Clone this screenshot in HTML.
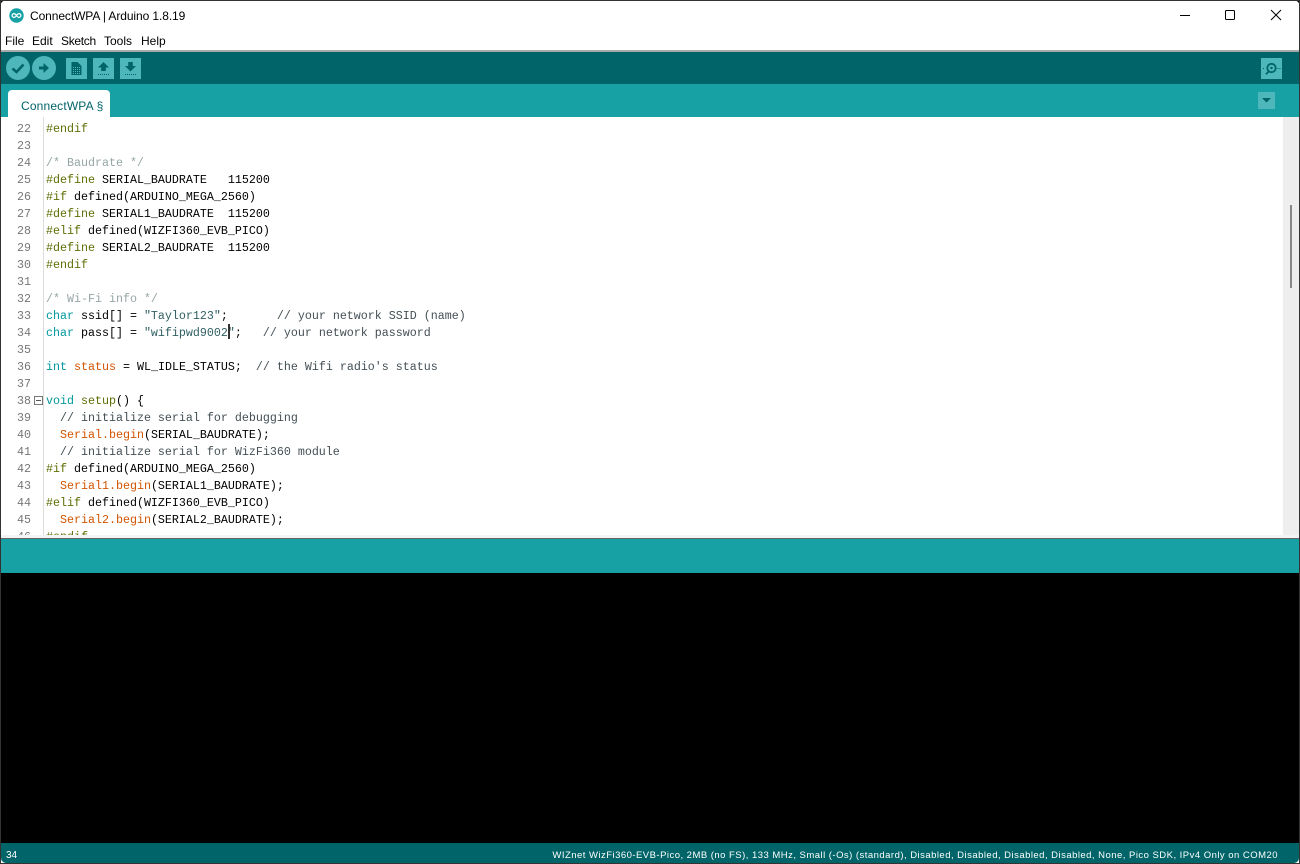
<!DOCTYPE html>
<html><head><meta charset="utf-8"><style>
html,body{margin:0;padding:0;background:#000}
#w{position:relative;width:1300px;height:864px;overflow:hidden;background:#000;font-family:"Liberation Sans",sans-serif}
#w>*{position:absolute}
.code{left:46px;top:121px;font:11.67px/17px "Liberation Mono",monospace;color:#000;white-space:pre;margin:0;width:1230px;height:414px;overflow:hidden}
.num{left:0;top:121px;width:31px;text-align:right;font:11.67px/17px "Liberation Mono",monospace;color:#777;white-space:pre;margin:0;height:414px;overflow:hidden}
.k{color:#00979c}.p{color:#5e6d03}.o{color:#d35400}.g{color:#95a5a6}.c{color:#434f54}.s{color:#2f5f62}
.m{top:34px;font-size:12px;color:#000;line-height:14px}
</style></head><body><div id="w">
<div style="left:0;top:0;width:1300px;height:864px;background:#fff;border-radius:7px 7px 0 0"></div>
<svg style="left:9px;top:8px" width="15" height="15" viewBox="0 0 15 15"><circle cx="7.5" cy="7.5" r="7.2" fill="#17a1a5"/><path d="M5 5.6a1.9 1.9 0 1 0 0 3.8c1.300 0 1.900-1.100 2.500-1.900s1.200-1.900 2.500-1.900a1.900 1.900 0 1 1 0 3.800c-1.300 0-1.900-1.100-2.500-1.900S6.300 5.600 5 5.600z" fill="none" stroke="#fff" stroke-width="1.200"/></svg>
<div style="left:30px;top:9px;font-size:12px;line-height:14px;color:#000;white-space:nowrap;letter-spacing:-.09px">ConnectWPA | Arduino 1.8.19</div>
<svg style="left:1170px;top:5px" width="120" height="20" viewBox="0 0 120 20" fill="none" stroke="#000" stroke-width="1"><path d="M10 10.500h10"/><rect x="55.500" y="5.500" width="9" height="9" rx="1"/><path d="M101 5l10 10M111 5l-10 10"/></svg>
<div class="m" style="left:5px">File</div><div class="m" style="left:32px">Edit</div><div class="m" style="left:61px;letter-spacing:-.3px">Sketch</div><div class="m" style="left:104px">Tools</div><div class="m" style="left:141px">Help</div>
<div style="left:1px;top:50px;width:1298px;height:2px;background:#a8a8a8"></div>
<div style="left:1px;top:52px;width:1298px;height:32px;background:#006468"></div>
<div style="left:1px;top:84px;width:1298px;height:33px;background:#17a1a5"></div>
<svg style="left:0;top:52px" width="145" height="32" viewBox="0 0 145 32">
<circle cx="18" cy="16" r="12" fill="#4db7bb"/><path d="M12.500 16.500l4 3.500 7-7.500" fill="none" stroke="#006468" stroke-width="2.600"/>
<circle cx="44" cy="16" r="12" fill="#4db7bb"/><path d="M39 14.500h4.500v-3.500l5.500 5-5.500 5v-3.500H39z" fill="#006468"/>
<rect x="66" y="6" width="21" height="21" fill="#4db7bb"/><path d="M71.500 10h6l4 4v9h-10z" fill="#006468"/><path d="M73 15.500h7M73 17.500h7M73 19.500h7M73 21.500h7" stroke="#4db7bb" stroke-width="1" stroke-dasharray="1 1"/>
<rect x="93" y="6" width="21" height="21" fill="#4db7bb"/><path d="M103.500 10l5.500 5.500h-3.200v3.500h-4.600v-3.500H98z" fill="#006468"/><path d="M98 22.500h11" stroke="#006468" stroke-width="1" stroke-dasharray="1 1"/>
<rect x="120" y="6" width="21" height="21" fill="#4db7bb"/><path d="M128.200 10h4.600v4h3.200l-5.500 5.500-5.500-5.500h3.200z" fill="#006468"/><path d="M125 22.500h11" stroke="#006468" stroke-width="1" stroke-dasharray="1 1"/>
</svg>
<svg style="left:1258px;top:58px" width="26" height="52" viewBox="0 0 26 52">
<rect x="3" y="0" width="21" height="21" fill="#4db7bb"/><circle cx="13.500" cy="10" r="4.200" fill="none" stroke="#006468" stroke-width="1.800"/><circle cx="13.500" cy="10" r="1.200" fill="#006468"/><path d="M10.500 13.500l-2.500 2.800" stroke="#006468" stroke-width="1.800"/><path d="M5 10.500h2M19.500 10.500h3" stroke="#006468" stroke-dasharray="1 1"/>
<rect x="0" y="34" width="17" height="17" fill="#4db7bb"/><path d="M4 40h9l-4.500 4.500z" fill="#006468"/>
</svg>
<div style="left:8px;top:90px;width:102px;height:27px;background:#fff;border-radius:4px 4px 0 0"></div>
<div style="left:21px;top:99px;font-size:12px;line-height:14px;color:#006468;white-space:nowrap;letter-spacing:.16px">ConnectWPA §</div>
<div style="left:43px;top:117px;width:1px;height:418px;background:#dcdcdc"></div>
<pre class="num">22
23
24
25
26
27
28
29
30
31
32
33
34
35
36
37
38
39
40
41
42
43
44
45
46</pre>
<svg style="left:34px;top:396px" width="9" height="9" viewBox="0 0 9 9"><rect x=".5" y=".5" width="8" height="8" fill="#fff" stroke="#777"/><path d="M2 4.500h5" stroke="#555"/></svg>
<pre class="code"><span class="p">#endif</span>

<span class="g">/* Baudrate */</span>
<span class="p">#define</span> SERIAL_BAUDRATE   115200
<span class="p">#if</span> defined(ARDUINO_MEGA_2560)
<span class="p">#define</span> SERIAL1_BAUDRATE  115200
<span class="p">#elif</span> defined(WIZFI360_EVB_PICO)
<span class="p">#define</span> SERIAL2_BAUDRATE  115200
<span class="p">#endif</span>

<span class="g">/* Wi-Fi info */</span>
<span class="k">char</span> ssid[] = <span class="s">"Taylor123"</span>;       <span class="c">// your network SSID (name)</span>
<span class="k">char</span> pass[] = <span class="s">"wifipwd9002"</span>;   <span class="c">// your network password</span>

<span class="k">int</span> <span class="o">status</span> = WL_IDLE_STATUS;  <span class="c">// the Wifi radio's status</span>

<span class="k">void</span> <span class="p">setup</span>() {
  <span class="c">// initialize serial for debugging</span>
  <span class="o">Serial.begin</span>(SERIAL_BAUDRATE);
  <span class="c">// initialize serial for WizFi360 module</span>
<span class="p">#if</span> defined(ARDUINO_MEGA_2560)
  <span class="o">Serial1.begin</span>(SERIAL1_BAUDRATE);
<span class="p">#elif</span> defined(WIZFI360_EVB_PICO)
  <span class="o">Serial2.begin</span>(SERIAL2_BAUDRATE);
<span class="p">#endif</span></pre>
<div style="left:228px;top:324px;width:2px;height:15px;background:#333"></div>
<div style="left:1283px;top:117px;width:16px;height:418px;background:#eee"></div>
<div style="left:1290px;top:205px;width:2px;height:83px;background:#888"></div>
<div style="left:1px;top:535px;width:1298px;height:4px;background:#f4f4f4"></div>
<div style="left:1px;top:538px;width:1298px;height:1px;background:#666"></div>
<div style="left:1px;top:539px;width:1298px;height:34px;background:#17a1a5"></div>
<div style="left:1px;top:573px;width:1298px;height:270px;background:#000"></div>
<div style="left:1px;top:843px;width:1298px;height:20px;background:#006468;border-radius:0 0 5px 5px"></div>
<div style="left:6px;top:850px;font-size:10px;line-height:12px;color:#fff">34</div>
<div style="right:22px;top:850px;font-size:9.500px;line-height:12px;color:#fff;white-space:nowrap;letter-spacing:.475px">WIZnet WizFi360-EVB-Pico, 2MB (no FS), 133 MHz, Small (-Os) (standard), Disabled, Disabled, Disabled, Disabled, None, Pico SDK, IPv4 Only on COM20</div>
<div style="left:0;top:0;width:1px;height:864px;background:#333"></div>
<div style="left:1299px;top:0;width:1px;height:864px;background:#333"></div>
<div style="left:0;top:0;width:1300px;height:1px;background:#333"></div>
<div style="left:0;top:863px;width:1300px;height:1px;background:#333"></div>
</div></body></html>
